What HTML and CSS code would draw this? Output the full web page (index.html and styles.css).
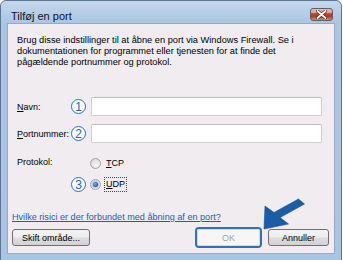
FILE: index.html
```html
<!DOCTYPE html>
<html lang="da">
<head>
<meta charset="utf-8">
<title>Tilføj en port</title>
<link rel="stylesheet" href="styles.css">
</head>
<body>
<div class="window">
  <div class="titlebar">
    <span class="title">Tilføj en port</span>
    <span class="close" aria-label="Luk">
      <svg width="11" height="9" viewBox="0 0 11 9"><path d="M1.5 1 L9.5 8 M9.5 1 L1.5 8" stroke="#3a2a2a" stroke-width="3.2" stroke-linecap="round"/><path d="M1.5 1 L9.5 8 M9.5 1 L1.5 8" stroke="#fff" stroke-width="1.8" stroke-linecap="round"/></svg>
    </span>
  </div>
  <div class="client">
    <p class="desc">Brug disse indstillinger til at åbne en port via Windows Firewall. Se i<br>dokumentationen for programmet eller tjenesten for at finde det<br>pågældende portnummer og protokol.</p>
    <div class="fields">
      <label class="lbl"><u>N</u>avn:</label>
      <span class="num">1</span>
      <input class="txt" type="text">
      <label class="lbl"><u>P</u>ortnummer:</label>
      <span class="num">2</span>
      <input class="txt" type="text">
    </div>
    <div class="fields proto">
      <span class="lbl">Protokol:</span>
      <span></span>
      <label class="radio"><span class="rb"></span><span class="rtext"><u>T</u>CP</span></label>
      <span></span>
      <span class="num">3</span>
      <label class="radio"><span class="rb on"></span><span class="rtext focus"><u>U</u>DP</span></label>
    </div>
    <a class="link" href="#">Hvilke risici er der forbundet med åbning af en port?</a>
    <div class="buttons">
      <span class="btn skift">Skift område...</span>
      <div class="right">
        <span class="okring"><span class="btn ok">OK</span></span>
        <span class="btn cancel">Annuller</span>
      </div>
    </div>
  </div>
  <svg class="arrow" width="48" height="40" viewBox="260 194 48 40">
    <polygon points="264,229 265,206 274,212.5 298.5,199 304.5,204 280,217.6 288.5,224" fill="#1a5da6" stroke="#164f8f" stroke-width="0.6" stroke-linejoin="round"/>
  </svg>
</div>
</body>
</html>
```

FILE: styles.css
```css
* { box-sizing: border-box; }
html, body { margin: 0; padding: 0; }
body {
  width: 343px;
  height: 260px;
  overflow: hidden;
  background: #ffffff;
  font-family: "Liberation Sans", Arial, sans-serif;
  font-size: 9px;
  color: #000;
}
.window {
  position: relative;
  width: 342px;
  height: 262px;
  display: flex;
  flex-direction: column;
  background: linear-gradient(180deg, #c3d7ec 0px, #abc6e3 22px, #a9c5e4 100%);
  border: 1px solid #5d7694;
  border-radius: 6px 6px 0 0;
  padding: 0 6px 7px 6px;
}
.titlebar {
  height: 22px;
  display: flex;
  align-items: flex-start;
  flex-shrink: 0;
}
.title {
  margin-top: 10px;
  margin-left: 4px;
  font-size: 11px;
  line-height: 11px;
  color: #111;
}
.close {
  margin-left: auto;
  margin-right: 2px;
  margin-top: 7px;
  width: 23px;
  height: 13px;
  border: 1px solid #5e5e66;
  border-radius: 3px;
  background: linear-gradient(180deg, #e8bcb4 0%, #dca096 35%, #c0442f 42%, #b83a26 68%, #d58a78 100%);
  display: flex;
  align-items: center;
  justify-content: center;
}
.close svg { display: block; }
.client {
  flex: 1;
  display: flex;
  flex-direction: column;
  background: #f0ecf0;
  border: 1px solid #93abc8;
  padding: 11px 5px 0 4px;
}
.desc {
  margin: 0 0 0 5px;
  font-size: 9.25px;
  line-height: 11px;
  white-space: nowrap;
}
.fields {
  margin: 29px 7px 0 5px;
  display: grid;
  grid-template-columns: 54px 20px 1fr;
  grid-template-rows: 19px 19px;
  row-gap: 8px;
  align-items: center;
}
.fields.proto {
  margin-top: 10px;
  grid-template-rows: 21px 21px;
  row-gap: 0;
}
.lbl { white-space: nowrap; }
.proto .lbl { align-self: start; margin-top: 4px; }
.num {
  width: 15px;
  height: 15px;
  border: 1.5px solid #2a6ec3;
  border-radius: 50%;
  background: #fbfbfd;
  color: #1f63bb;
  font-size: 12px;
  line-height: 12px;
  display: flex;
  align-items: center;
  justify-content: center;
}
.txt {
  width: 100%;
  height: 19px;
  margin: 0;
  border: 1px solid #cfcdd3;
  border-top-color: #bdbac2;
  border-radius: 2px;
  background: #fff;
  outline: none;
}
.radio {
  display: flex;
  align-items: center;
  margin-left: -1px;
}
.rb {
  position: relative;
  width: 11px;
  height: 11px;
  border-radius: 50%;
  border: 1px solid #a3a3a8;
  background: radial-gradient(circle at 60% 65%, #f7f7f7 0%, #dcdcdc 70%, #cfcfd2 100%);
  flex-shrink: 0;
}
.rb.on::after {
  content: "";
  position: absolute;
  left: 2px;
  top: 2px;
  width: 5px;
  height: 5px;
  border-radius: 50%;
  background: radial-gradient(circle at 40% 40%, #7fb2ea 0%, #2a63b0 60%, #173f7d 100%);
  box-shadow: 0 0 0 1px #a9c9ee;
}
.rtext {
  margin-left: 3px;
  padding: 1px 1px;
  border: 1px dotted transparent;
  line-height: 11px;
}
.rtext.focus { border-color: #444; }
.link {
  display: block;
  align-self: flex-start;
  margin-top: 16px;
  font-size: 9.1px;
  line-height: 12px;
  color: #1d5db4;
  text-decoration: underline;
  white-space: nowrap;
}
.buttons {
  margin-top: 4px;
  height: 21px;
  display: flex;
  align-items: center;
  justify-content: space-between;
}
.right {
  display: flex;
  align-items: center;
  gap: 6px;
}
.btn {
  display: flex;
  align-items: center;
  justify-content: center;
  height: 17px;
  border: 1px solid #707070;
  border-radius: 3px;
  background: linear-gradient(180deg, #f4f4f4 0%, #ececec 48%, #dedede 52%, #d2d2d2 100%);
  font-size: 9px;
  line-height: 10px;
  color: #000;
}
.skift { width: 78px; }
.cancel { width: 61px; height: 17px; }
.okring {
  display: flex;
  width: 67px;
  height: 21px;
  border: 2px solid #3272b4;
  border-radius: 4px;
  padding: 0;
}
.btn.ok {
  width: 100%;
  height: 100%;
  border: 1px solid #d5dbe3;
  border-radius: 2px;
  background: #f6f6f6;
  color: #a3a3a3;
}
.arrow {
  position: absolute;
  left: 259px;
  top: 193px;
}
```
